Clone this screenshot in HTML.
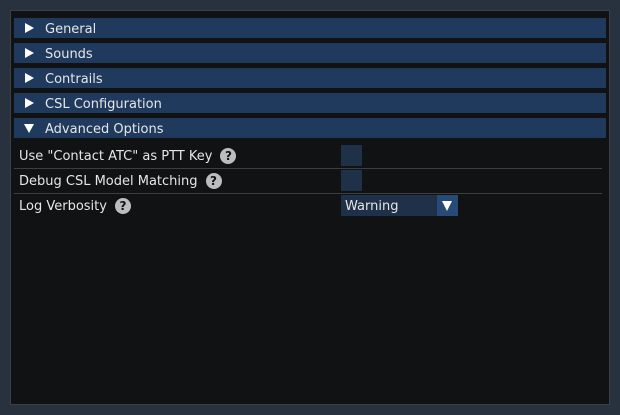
<!DOCTYPE html>
<html><head><style>
html,body{margin:0;padding:0}
body{width:620px;height:415px;background:#28323e;position:relative;overflow:hidden;font-family:"DejaVu Sans","Liberation Sans",sans-serif;font-size:13px;color:#e6e6e6}
.win{position:absolute;left:10px;top:10px;width:598px;height:393px;background:#111214;border:1px solid #3c4048}
.hdr{position:absolute;left:14px;width:592px;height:20px;background:#1f3a5d;line-height:20px}
.r{position:absolute;left:11px;top:5px;width:0;height:0;border-left:9px solid #fff;border-top:5px solid transparent;border-bottom:5px solid transparent}
.d{position:absolute;left:10px;top:6px;width:0;height:0;border-top:9px solid #fff;border-left:5px solid transparent;border-right:5px solid transparent}
.hdr .t{position:absolute;left:31px;top:2px}
.lbl{position:absolute;left:19px;line-height:18px}
.q{display:inline-block;width:16px;height:16px;border-radius:50%;background:#bdbdbd;color:#111214;font-weight:bold;font-size:12px;text-align:center;line-height:16px;vertical-align:middle;margin-left:8px;position:relative;top:-1px}
.sep{position:absolute;left:14px;width:588px;height:1px;background:#3e3e42}
.cb{position:absolute;left:341px;width:21px;height:21px;background:#1f3049}
.combo{position:absolute;left:341px;top:195px;width:117px;height:21px;background:#1f3049}
.combo .t{position:absolute;left:4px;top:1px;line-height:21px}
.combo .b{position:absolute;right:0;top:0;width:21px;height:21px;background:#284a76}
.combo .b i{position:absolute;left:5px;top:6px;width:0;height:0;border-top:10px solid #fff;border-left:5.5px solid transparent;border-right:5.5px solid transparent}
</style></head><body>
<div class="win"></div>
<div class="hdr" style="top:18px"><i class="r"></i><span class="t">General</span></div>
<div class="hdr" style="top:43px"><i class="r"></i><span class="t">Sounds</span></div>
<div class="hdr" style="top:68px"><i class="r"></i><span class="t">Contrails</span></div>
<div class="hdr" style="top:93px"><i class="r"></i><span class="t">CSL Configuration</span></div>
<div class="hdr" style="top:118px"><i class="d"></i><span class="t">Advanced Options</span></div>
<div class="lbl" style="top:148px">Use "Contact ATC" as PTT Key<span class="q">?</span></div>
<div class="cb" style="top:145px"></div>
<div class="sep" style="top:168px"></div>
<div class="lbl" style="top:173px">Debug CSL Model Matching<span class="q">?</span></div>
<div class="cb" style="top:170px"></div>
<div class="sep" style="top:193px"></div>
<div class="lbl" style="top:198px">Log Verbosity<span class="q">?</span></div>
<div class="combo"><span class="t">Warning</span><span class="b"><i></i></span></div>
</body></html>
